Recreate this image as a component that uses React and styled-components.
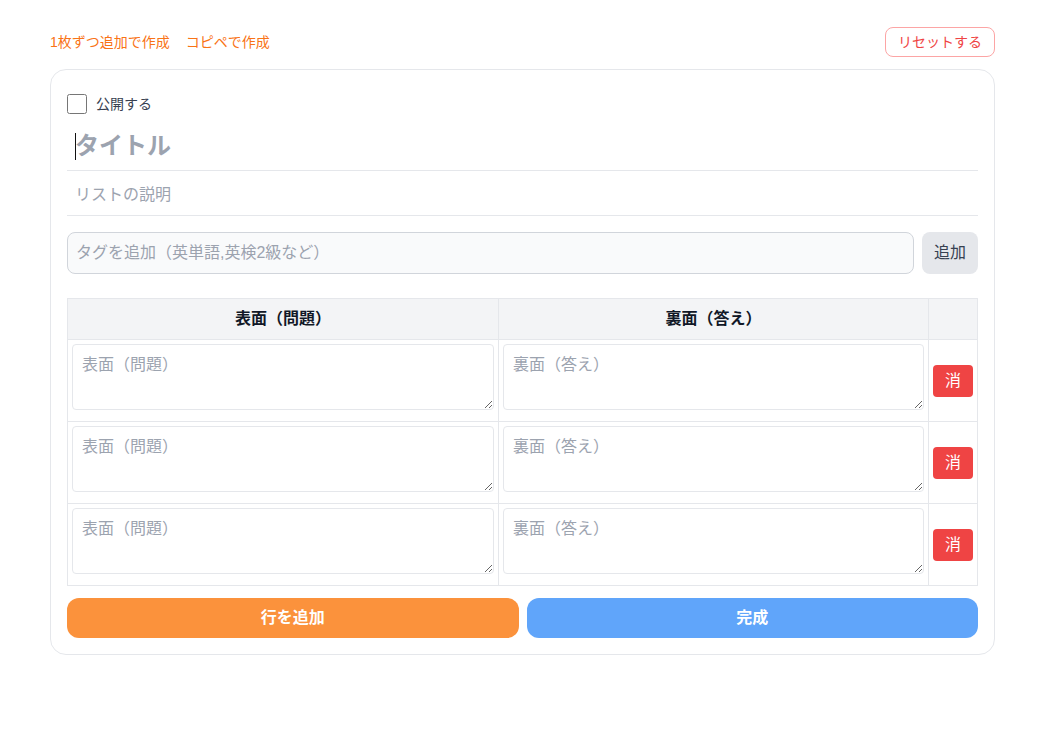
import React from 'react'
import styled, { createGlobalStyle } from 'styled-components'

const GlobalStyle = createGlobalStyle`
  * {
    box-sizing: border-box;
  }
  body {
    margin: 0;
    background-color: #fff;
    font-family: "Liberation Sans", "Noto Sans CJK JP", sans-serif;
    color: #111827;
  }
  input, textarea, button {
    font-family: inherit;
  }
  input::placeholder, textarea::placeholder {
    color: #9ca3af;
    opacity: 1;
  }
`

const rows = [0, 1, 2]

const App = () => {
  return (
    <Page>
      <GlobalStyle />
      <TopBar>
        <Links>
          <ModeLink>1枚ずつ追加で作成</ModeLink>
          <ModeLink>コピペで作成</ModeLink>
        </Links>
        <ResetButton>リセットする</ResetButton>
      </TopBar>
      <Card>
        <PublicRow>
          <Checkbox type="checkbox" />
          <PublicLabel>公開する</PublicLabel>
        </PublicRow>
        <TitleBox>
          <TitleInput placeholder="タイトル" />
          <TextCaret />
        </TitleBox>
        <DescriptionInput placeholder="リストの説明" />
        <TagRow>
          <TagInput placeholder="タグを追加（英単語,英検2級など）" />
          <TagButton>追加</TagButton>
        </TagRow>
        <Table>
          <colgroup>
            <col style={{ width: 431 }} />
            <col style={{ width: 430 }} />
            <col style={{ width: 49 }} />
          </colgroup>
          <thead>
            <tr>
              <HeadCell>表面（問題）</HeadCell>
              <HeadCell>裏面（答え）</HeadCell>
              <HeadCell />
            </tr>
          </thead>
          <tbody>
            {rows.map((row) => (
              <tr key={row}>
                <TextCell>
                  <CardText placeholder="表面（問題）" />
                </TextCell>
                <TextCell>
                  <CardText placeholder="裏面（答え）" />
                </TextCell>
                <ButtonCell>
                  <DeleteButton>消</DeleteButton>
                </ButtonCell>
              </tr>
            ))}
          </tbody>
        </Table>
        <Actions>
          <ActionButton $color="#fb923c">行を追加</ActionButton>
          <ActionButton $color="#60a5fa">完成</ActionButton>
        </Actions>
      </Card>
    </Page>
  )
}

const Page = styled.div`
  width: 945px;
  margin-left: 50px;
  padding-top: 27px;
  padding-bottom: 74px;
`

const TopBar = styled.div`
  display: flex;
  justify-content: space-between;
  align-items: center;
  margin-bottom: 12px;
`

const Links = styled.div`
  display: flex;
  gap: 16px;
`

const ModeLink = styled.a`
  font-size: 14px;
  line-height: 20px;
  color: #f97316;
  cursor: pointer;
`

const ResetButton = styled.button`
  width: 110px;
  height: 30px;
  padding: 0 0 2px;
  font-size: 14px;
  color: #ef4444;
  background-color: #fff;
  border: 1px solid #fca5a5;
  border-radius: 8px;
`

const Card = styled.div`
  display: flex;
  flex-direction: column;
  height: 586px;
  padding: 16px;
  border: 1px solid #e5e7eb;
  border-radius: 16px;
`

const PublicRow = styled.label`
  display: flex;
  align-items: center;
  gap: 9px;
  margin-top: 8px;
`

const Checkbox = styled.input`
  width: 20px;
  height: 20px;
  margin: 0;
`

const PublicLabel = styled.span`
  font-size: 14px;
  line-height: 20px;
  color: #374151;
`

const TitleBox = styled.div`
  position: relative;
  margin-top: 10px;
`

const TitleInput = styled.input`
  display: block;
  width: 100%;
  height: 47px;
  padding: 7px 8px 9px;
  font-size: 24px;
  font-weight: 700;
  color: #111827;
  border: 0;
  border-bottom: 1px solid #e5e7eb;
  outline: none;
`

const TextCaret = styled.span`
  position: absolute;
  top: 9px;
  left: 8px;
  width: 1px;
  height: 27px;
  background-color: #111;
`

const DescriptionInput = styled.input`
  width: 100%;
  height: 45px;
  padding: 11px 8px 7px;
  font-size: 16px;
  border: 0;
  border-bottom: 1px solid #e5e7eb;
  outline: none;
`

const TagRow = styled.div`
  display: flex;
  gap: 8px;
  margin-top: 16px;
`

const TagInput = styled.input`
  flex: 1;
  height: 42px;
  padding: 8px;
  font-size: 16px;
  background-color: #f9fafb;
  border: 1px solid #d1d5db;
  border-radius: 8px;
  outline: none;
`

const TagButton = styled.button`
  width: 56px;
  height: 42px;
  padding: 0 0 4px;
  font-size: 16px;
  color: #374151;
  background-color: #e5e7eb;
  border: 0;
  border-radius: 8px;
`

const Table = styled.table`
  width: 911px;
  margin-top: 24px;
  table-layout: fixed;
  border-collapse: collapse;
`

const HeadCell = styled.th`
  height: 41px;
  padding: 6px 8px 10px;
  font-size: 16px;
  font-weight: 700;
  color: #111827;
  text-align: center;
  background-color: #f3f4f6;
  border: 1px solid #e5e7eb;
`

const TextCell = styled.td`
  height: 82px;
  padding: 4px;
  vertical-align: top;
  border: 1px solid #e5e7eb;
`

const ButtonCell = styled.td`
  height: 82px;
  padding: 4px;
  vertical-align: middle;
  border: 1px solid #e5e7eb;
`

const CardText = styled.textarea`
  display: block;
  width: 100%;
  height: 66px;
  padding: 8px 9px;
  font-size: 16px;
  line-height: 24px;
  background-color: #fff;
  border: 1px solid #e5e7eb;
  border-radius: 4px;
  outline: none;
`

const DeleteButton = styled.button`
  display: block;
  width: 40px;
  height: 32px;
  padding: 0 0 4px;
  font-size: 16px;
  color: #fff;
  background-color: #ef4444;
  border: 0;
  border-radius: 4px;
`

const Actions = styled.div`
  display: flex;
  gap: 8px;
  margin-top: 12px;
`

const ActionButton = styled.button`
  flex: 1;
  height: 40px;
  padding: 0 0 4px;
  font-size: 16px;
  font-weight: 700;
  color: #fff;
  background-color: ${(props) => props.$color};
  border: 0;
  border-radius: 12px;
`

export default App
